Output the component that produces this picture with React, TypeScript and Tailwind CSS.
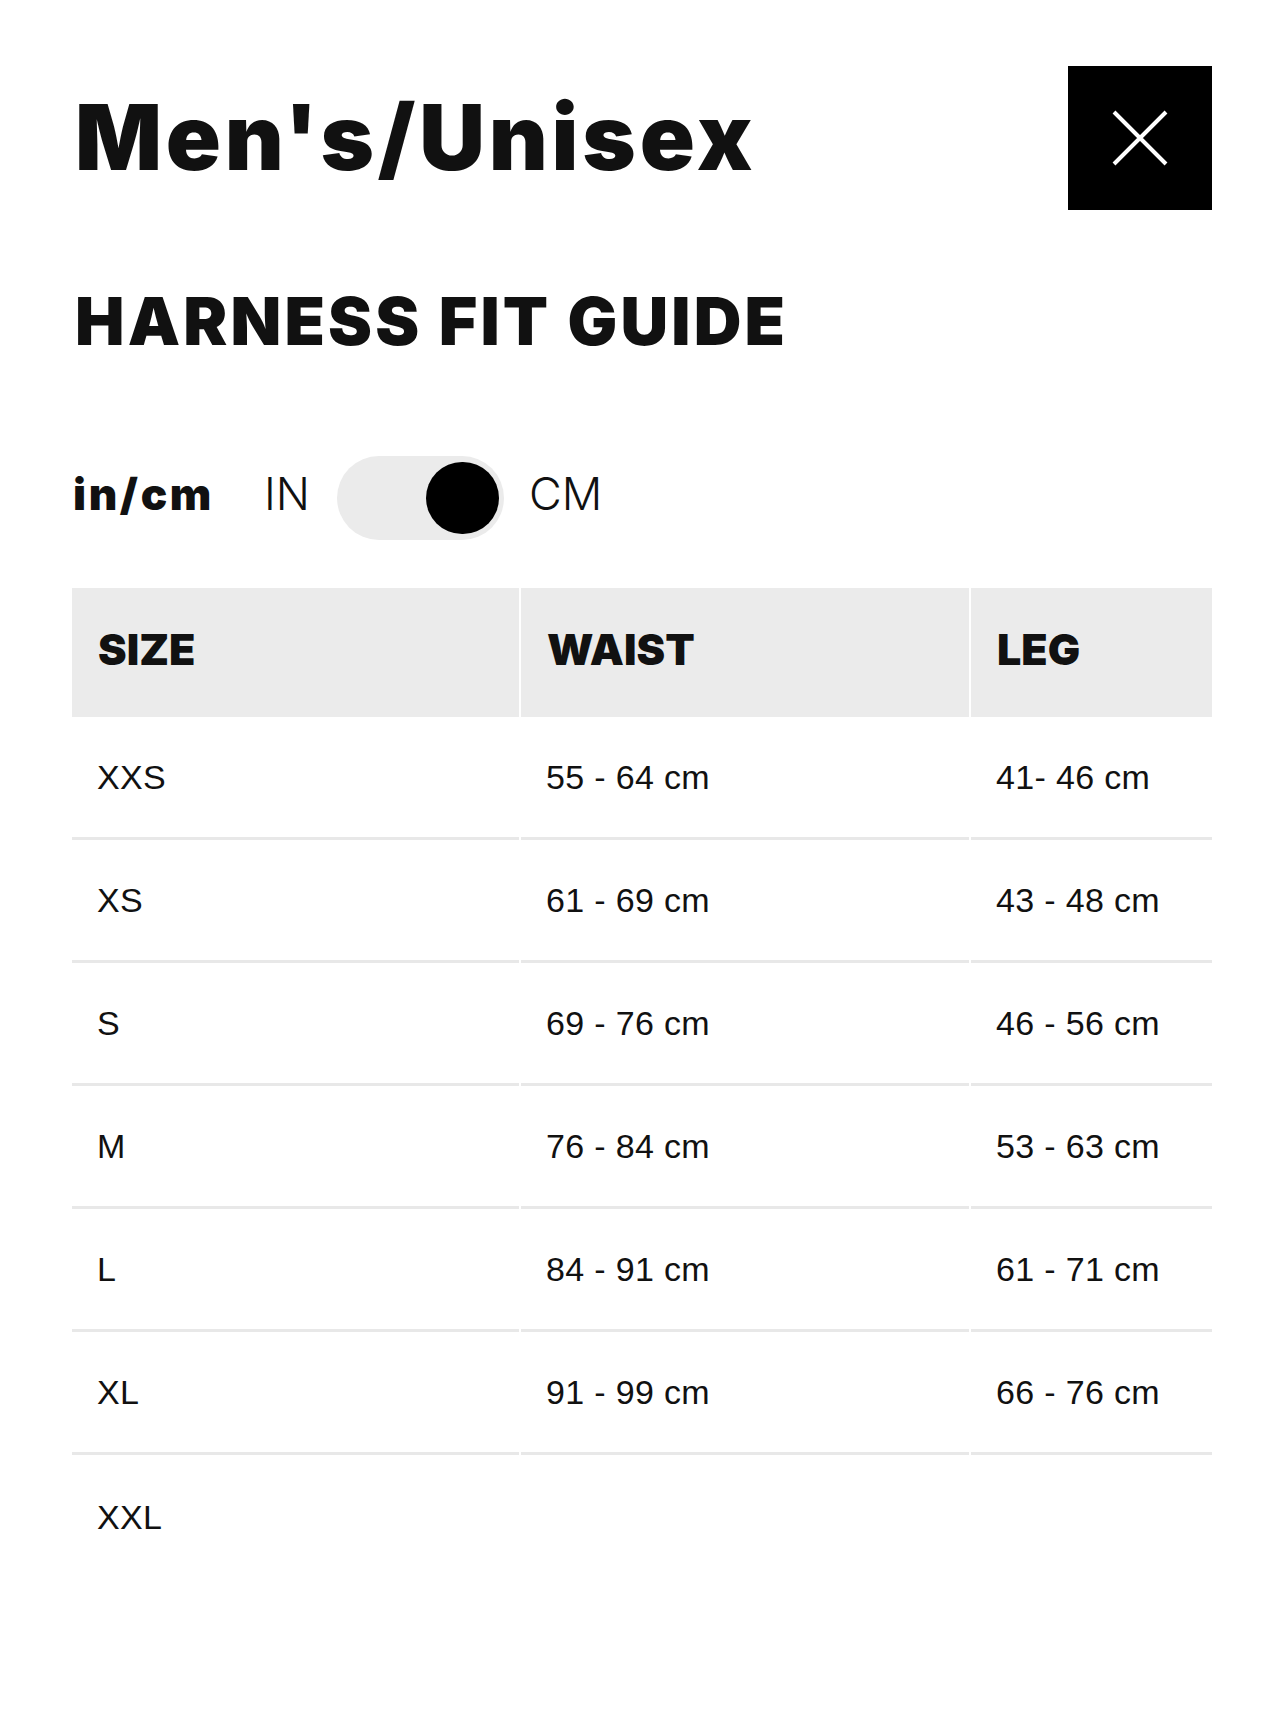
const rows = [
  { size: 'XXS', waist: '55 - 64 cm', leg: '41- 46 cm' },
  { size: 'XS', waist: '61 - 69 cm', leg: '43 - 48 cm' },
  { size: 'S', waist: '69 - 76 cm', leg: '46 - 56 cm' },
  { size: 'M', waist: '76 - 84 cm', leg: '53 - 63 cm' },
  { size: 'L', waist: '84 - 91 cm', leg: '61 - 71 cm' },
  { size: 'XL', waist: '91 - 99 cm', leg: '66 - 76 cm' },
  { size: 'XXL', waist: '', leg: '' },
]

const heavy = "font-['Inter',sans-serif] font-black"
const body = "font-['Liberation_Sans',Arial,sans-serif]"

export default function App() {
  return (
    <div className="min-h-[1730px] bg-white px-[72px] pt-[66px] text-[#111]">
      <div className="flex items-start justify-between">
        <h1 className={`${heavy} mt-[26px] ml-[3px] text-[91px] leading-none tracking-[0.042em]`}>
          Men's/Unisex
        </h1>
        <button className="flex h-[144px] w-[144px] items-center justify-center bg-black">
          <svg width="56" height="56" viewBox="0 0 56 56" fill="none">
            <path d="M2 2L54 54M54 2L2 54" stroke="white" strokeWidth="4" />
          </svg>
        </button>
      </div>

      <h2 className={`${heavy} mt-[78px] ml-[3px] text-[66px] leading-none tracking-[0.048em] uppercase`}>
        Harness Fit Guide
      </h2>

      <div className="mt-[102px] flex items-center">
        <span className={`${heavy} mb-[9px] ml-[1px] text-[44px] leading-none tracking-[0.06em]`}>
          in/cm
        </span>
        <span className="mb-[9px] ml-[50px] font-['Inter',sans-serif] text-[45px] leading-none font-light">
          IN
        </span>
        <div className="ml-[27px] flex h-[84px] w-[167px] items-center justify-end rounded-full bg-[#ebebeb] pr-[5px]">
          <div className="h-[72px] w-[73px] rounded-full bg-black" />
        </div>
        <span className="mb-[9px] ml-[25px] font-['Inter',sans-serif] text-[45px] leading-none font-light">
          CM
        </span>
      </div>

      <div className="mt-[48px] grid grid-cols-[447px_448px_1fr] gap-x-[2px]">
        {['Size', 'Waist', 'Leg'].map((h) => (
          <div
            key={h}
            className={`${heavy} flex h-[129px] items-center bg-[#ebebeb] pb-[6px] pl-[26px] text-[43px] leading-none uppercase`}
          >
            {h}
          </div>
        ))}
        {rows.map((r, i) =>
          [r.size, r.waist, r.leg].map((v, j) => (
            <div
              key={`${i}-${j}`}
              className={`${body} flex h-[123px] items-center pl-[25px] text-[34px] leading-none tracking-[0.01em] ${
                i < rows.length - 1 ? 'border-b-[3px] border-[#e8e8e8]' : ''
              }`}
            >
              {v}
            </div>
          ))
        )}
      </div>
    </div>
  )
}
